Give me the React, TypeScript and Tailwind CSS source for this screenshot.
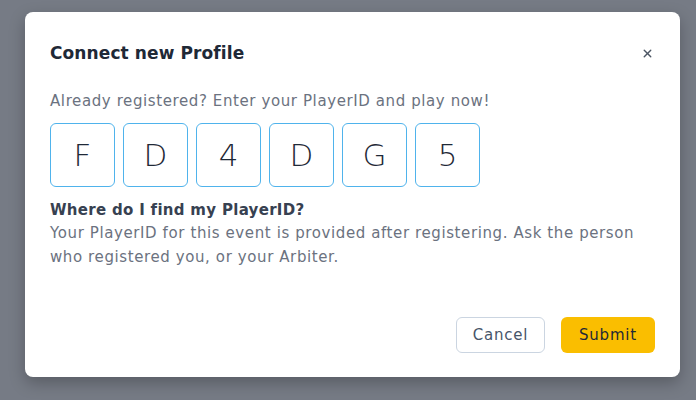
import { X } from "lucide-react";

const code = ["F", "D", "4", "D", "G", "5"];

export default function App() {
  return (
    <div
      className="w-[696px] h-[400px] bg-[#767b85] pt-[12px] pl-[25px]"
      style={{ fontFamily: '"DejaVu Sans", "Noto Sans", sans-serif' }}
    >
      <div className="w-[655px] h-[365px] bg-white rounded-lg shadow-[0_6px_16px_rgba(0,0,0,0.25)] px-[25px] pt-[28px] pb-[24px] flex flex-col">
        <div className="flex items-center justify-between h-[26px]">
          <h2 className="text-[17px] font-semibold text-[#1f2937] leading-[26px] tracking-[0.1px]">Connect new Profile</h2>
          <button className="mr-[1px] text-[#4b5563]">
            <X className="w-[13px] h-[13px]" strokeWidth={2.5} />
          </button>
        </div>

        <p className="mt-[24px] text-[15px] leading-[22px] tracking-[0.6px] text-[#6b7280]">
          Already registered? Enter your PlayerID and play now!
        </p>

        <div className="mt-[11px] flex gap-2">
          {code.map((c, i) => (
            <div
              key={i}
              className="w-[65px] h-[64px] border border-[#4fb3ec] rounded-md flex items-center justify-center text-[31px] font-extralight text-[#1f2937]"
            >
              {c}
            </div>
          ))}
        </div>

        <h3 className="mt-3 text-[15px] leading-[22px] font-bold tracking-[0.3px] text-[#374151]">Where do I find my PlayerID?</h3>
        <p className="text-[15px] leading-6 tracking-[0.6px] text-[#6b7280]">
          Your PlayerID for this event is provided after registering. Ask the person who registered you, or your Arbiter.
        </p>

        <div className="mt-auto flex justify-end gap-4">
          <button className="w-[89px] h-[36px] rounded-md border border-[#cbd5e1] text-[15px] font-medium tracking-[0.8px] text-[#475569]">
            Cancel
          </button>
          <button className="w-[94px] h-[36px] rounded-md bg-[#fabe00] text-[15px] font-medium tracking-[0.8px] text-[#1f2937]">
            Submit
          </button>
        </div>
      </div>
    </div>
  );
}
